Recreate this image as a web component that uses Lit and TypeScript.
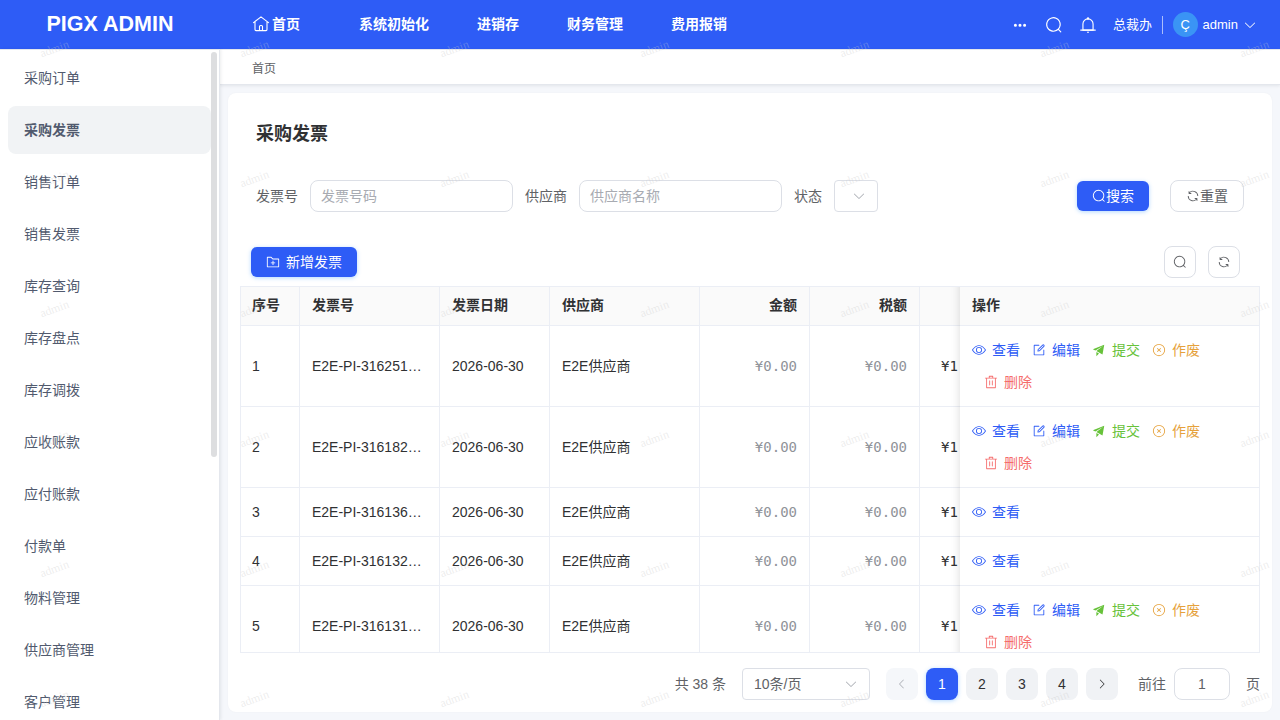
import { LitElement, html, css, svg } from "lit";
import { customElement } from "lit/decorators.js";

const ICONS: Record<string, string[]> = {
  search: ["m795.904 750.72 124.992 124.928a32 32 0 0 1-45.248 45.248L750.656 795.904a416 416 0 1 1 45.248-45.248zM480 832a352 352 0 1 0 0-704 352 352 0 0 0 0 704"],
  refresh: ["M771.776 794.88A384 384 0 0 1 128 512h64a320 320 0 0 0 555.712 216.448H654.72a32 32 0 1 1 0-64h149.056a32 32 0 0 1 32 32v148.928a32 32 0 1 1-64 0v-50.56zM276.288 295.616h92.992a32 32 0 0 1 0 64H220.16a32 32 0 0 1-32-32V178.56a32 32 0 0 1 64 0v50.56A384 384 0 0 1 896.128 512h-64a320 320 0 0 0-555.776-216.384z"],
  down: ["M831.872 340.864 512 652.672 192.128 340.864a30.592 30.592 0 0 0-42.752 0 29.12 29.12 0 0 0 0 41.6L489.664 714.24a32 32 0 0 0 44.672 0l340.288-331.712a29.12 29.12 0 0 0 0-41.728 30.592 30.592 0 0 0-42.752 0z"],
  left: ["M609.408 149.376 277.76 489.6a32 32 0 0 0 0 44.672l331.648 340.352a29.12 29.12 0 0 0 41.728 0 30.592 30.592 0 0 0 0-42.752L339.264 511.936l311.872-319.872a30.592 30.592 0 0 0 0-42.688 29.12 29.12 0 0 0-41.728 0z"],
  right: ["M340.864 149.312a30.592 30.592 0 0 0 0 42.752L652.736 512 340.864 831.872a30.592 30.592 0 0 0 0 42.752 29.12 29.12 0 0 0 41.728 0L714.24 534.336a32 32 0 0 0 0-44.672L382.592 149.376a29.12 29.12 0 0 0-41.728 0z"],
  view: ["M512 160c320 0 512 352 512 352S832 864 512 864 0 512 0 512s192-352 512-352m0 64c-225.28 0-384.128 208.064-436.8 288 52.608 79.872 211.456 288 436.8 288 225.28 0 384.128-208.064 436.8-288-52.608-79.872-211.456-288-436.8-288m0 64a224 224 0 1 1 0 448 224 224 0 0 1 0-448m0 64a160.192 160.192 0 0 0-160 160c0 88.192 71.744 160 160 160s160-71.808 160-160-71.744-160-160-160"],
  edit: ["M832 512a32 32 0 1 1 64 0v352a32 32 0 0 1-32 32H160a32 32 0 0 1-32-32V160a32 32 0 0 1 32-32h352a32 32 0 0 1 0 64H192v640h640z", "m469.952 554.24 52.8-7.552L847.104 222.4a32 32 0 1 0-45.248-45.248L477.44 501.44l-7.552 52.8zm422.4-422.4a96 96 0 0 1 0 135.808l-331.84 331.84a32 32 0 0 1-18.112 9.088L436.8 623.68a32 32 0 0 1-36.224-36.224l15.104-105.6a32 32 0 0 1 9.024-18.112l331.904-331.84a96 96 0 0 1 135.744 0z"],
  send: ["m64 448 832-320-128 704-446.08-243.328L832 192 242.816 545.472zm256 512V657.024L512 768z"],
  close: ["m466.752 512-90.496-90.496a32 32 0 0 1 45.248-45.248L512 466.752l90.496-90.496a32 32 0 0 1 45.248 45.248L557.248 512l90.496 90.496a32 32 0 1 1-45.248 45.248L512 557.248l-90.496 90.496a32 32 0 0 1-45.248-45.248z", "M512 896a384 384 0 1 0 0-768 384 384 0 0 0 0 768m0 64a448 448 0 1 1 0-896 448 448 0 0 1 0 896"],
  del: ["M160 256H96a32 32 0 0 1 0-64h256V95.936a32 32 0 0 1 32-32h256a32 32 0 0 1 32 32V192h256a32 32 0 1 1 0 64h-64v672a32 32 0 0 1-32 32H192a32 32 0 0 1-32-32zm448-64v-64H416v64zM224 896h576V256H224zm192-128a32 32 0 0 1-32-32V416a32 32 0 0 1 64 0v320a32 32 0 0 1-32 32m192 0a32 32 0 0 1-32-32V416a32 32 0 0 1 64 0v320a32 32 0 0 1-32 32"],
  folder: ["M128 192v640h768V320H485.76L357.504 192zm-32-64h287.872l128.384 128H928a32 32 0 0 1 32 32v576a32 32 0 0 1-32 32H96a32 32 0 0 1-32-32V160a32 32 0 0 1 32-32m384 416V416h64v128h128v64H544v128h-64V608H352v-64z"],
  bell: ["M512 64a64 64 0 0 1 64 64v64H448v-64a64 64 0 0 1 64-64", "M256 768h512V448a256 256 0 1 0-512 0zm256-640a320 320 0 0 1 320 320v384H192V448a320 320 0 0 1 320-320", "M96 768h832q32 0 32 32t-32 32H96q-32 0-32-32t32-32m352 128h128a64 64 0 0 1-128 0"],
  more: ["M176 416a112 112 0 1 0 0 224 112 112 0 0 0 0-224m336 0a112 112 0 1 0 0 224 112 112 0 0 0 0-224m336 0a112 112 0 1 0 0 224 112 112 0 0 0 0-224"],
};

const icon = (name: string, cls = "i14") => html`<svg class=${cls} viewBox="0 0 1024 1024" fill="currentColor">${ICONS[name].map((d) => svg`<path d=${d}></path>`)}</svg>`;

const homeIcon = html`<svg class="i18" viewBox="0 0 18 18" fill="none" stroke="currentColor" stroke-width="1.1" stroke-linejoin="round" stroke-linecap="round"><path d="M1.5 7.6 9 1.9l7.5 5.7M3 7v7.6q0 1 1 1h10q1 0 1-1V7M7.5 15.3v-3.8q0-1 1-1h1q1 0 1 1v3.8"></path></svg>`;

const MENU = ["采购订单", "采购发票", "销售订单", "销售发票", "库存查询", "库存盘点", "库存调拨", "应收账款", "应付账款", "付款单", "物料管理", "供应商管理", "客户管理"];
const ROWS = [
  { no: "E2E-PI-316251…", full: true },
  { no: "E2E-PI-316182…", full: true },
  { no: "E2E-PI-316136…", full: false },
  { no: "E2E-PI-316132…", full: false },
  { no: "E2E-PI-316131…", full: true },
];

@customElement("app-root")
export class AppRoot extends LitElement {
  static styles = css`
    * { box-sizing: border-box; }
    :host {
      display: grid; grid-template: 49px 671px / 220px 1060px; position: relative;
      width: 1280px; height: 720px; overflow: hidden; background: #f5f7fb;
      font: 14px/22px "Liberation Sans", "Noto Sans CJK SC", sans-serif; color: #606266;
    }
    svg { display: block; flex: none; }
    .i14 { width: 14px; height: 14px; }
    .i12 { width: 12px; height: 12px; }
    .i18 { width: 18px; height: 18px; }
    header { grid-column: 1 / 3; display: flex; align-items: center; background: #2e5cf6; color: #fff; height: 49px; }
    .logo { width: 220px; text-align: center; font-size: 21.5px; font-weight: 700; line-height: 48px; height: 49px; }
    nav { display: flex; align-items: center; font-weight: 700; margin-left: 32px; flex: 1; height: 49px; padding-bottom: 1px; }
    nav span { margin-right: 48px; }
    nav .home { display: flex; align-items: center; gap: 2px; margin-right: 59px; }
    .tools { display: flex; align-items: center; font-size: 13px; padding-right: 23px; }
    .dept { margin-left: 16.5px; }
    .rule { width: 1px; height: 18px; background: #abbefb; margin: 0 10px 0 9.5px; }
    .avatar { width: 25px; height: 25px; border-radius: 50%; background: #3a94f5; text-align: center; line-height: 26px; font-size: 13px; }
    .user { margin: 0 5px 0 5px; }
    .more { margin-right: 18px; }
    .find { margin-right: 16px; }
    aside { background: #fff; border-top: 1px solid #e4e7ed; border-right: 1px solid #e4e7ed; display: flex; box-shadow: 1px 0 3px rgba(0, 21, 41, 0.08); height: 671px; overflow: hidden; z-index: 1; }
    .menu { width: 203px; margin-left: 8px; display: flex; flex-direction: column; gap: 4px; padding-top: 4px; }
    .menu div { height: 48px; flex: none; padding: 0 16px; line-height: 48px; border-radius: 8px; color: #515a6e; }
    .menu .on { background: #f1f3f5; font-weight: 700; }
    .thumb { width: 6px; height: 405px; margin-top: 2px; border-radius: 3px; background: #dddee0; }
    main { display: flex; flex-direction: column; }
    .crumb { height: 36px; background: #fff; border-top: 1px solid #e4e7ed; border-bottom: 1px solid #e4e7ed; padding: 0 32px; line-height: 38px; font-size: 12px; box-shadow: 0 1px 3px rgba(0, 21, 41, 0.08); }
    .card { margin: 8px 8px 0; height: 619px; background: #fff; border-radius: 8px; padding: 0 12px; box-shadow: 0 0 2px rgba(0, 0, 0, 0.04); display: flex; flex-direction: column; }
    h1 { margin: 27px 16px 0; font-size: 18px; line-height: 28px; font-weight: 700; color: #303133; height: 28px; }
    .form { display: flex; align-items: center; height: 32px; margin: 32px 16px 0; }
    .form label { margin-right: 12px; }
    .input { width: 203px; height: 32px; border: 1px solid #dcdfe6; border-radius: 8px; padding: 0 10px; line-height: 30px; color: #a8abb2; margin-right: 12px; }
    .select { width: 44px; height: 32px; border: 1px solid #dcdfe6; border-radius: 4px; display: flex; align-items: center; padding-left: 17px; color: #a8abb2; margin-right: auto; }
    .btn { display: flex; align-items: center; justify-content: center; border-radius: 6px; height: 30px; }
    .primary { background: #2e5cf6; color: #fff; box-shadow: 0 1px 4px rgba(64, 158, 255, 0.4); }
    .go { width: 72px; margin-right: 21px; }
    .plain { border: 1px solid #dcdfe6; border-radius: 8px; height: 32px; }
    .reset { width: 74px; }
    .bar { display: flex; align-items: center; height: 32px; margin: 34px 20px 8px 11px; gap: 12px; }
    .add { width: 106px; gap: 6px; margin-right: auto; }
    .sq { width: 32px; }
    .table { height: 367px; border: 1px solid #ebeef5; overflow: hidden; position: relative; color: #303133; }
    .row { display: grid; grid-template-columns: 59px 140px 110px 150px 110px 110px 40px 299px; height: 81px; }
    .row.short { height: 49px; }
    .row.head { height: 39px; font-weight: 700; }
    .head .cell { background: #fafafa; padding-bottom: 2px; }
    .cell { border-right: 1px solid #ebeef5; border-bottom: 1px solid #ebeef5; padding: 0 12px; display: flex; align-items: center; white-space: nowrap; overflow: hidden; }
    .cell:first-child { padding-left: 11px; }
    .num { justify-content: flex-end; }
    .mono { font-family: "DejaVu Sans Mono", monospace; color: #909399; }
    .cut { justify-content: flex-start; padding: 0 0 0 21px; color: #303133; font-family: "DejaVu Sans Mono", monospace; border-right: 0; }
    .ops { display: flex; flex-wrap: wrap; align-content: center; row-gap: 0; column-gap: 12px; line-height: 32px; border-right: 0; }
    .op { display: flex; align-items: center; gap: 6px; height: 32px; }
    .view, .edit { color: #2e5cf6; }
    .send { color: #67c23a; }
    .close { color: #e6a23c; }
    .del { color: #f56c6c; margin-left: 12px; margin-right: 150px; }
    .shade { position: absolute; top: 0; bottom: 0; left: 709px; width: 10px; box-shadow: inset -10px 0 10px -10px rgba(0, 0, 0, 0.15); }
    .pager { display: flex; align-items: center; justify-content: flex-end; height: 32px; margin-top: 15px; }
    .size { width: 128px; height: 32px; border: 1px solid #dcdfe6; border-radius: 4px; display: flex; align-items: center; justify-content: space-between; padding: 0 11px; margin: 0 16px; }
    .size svg { color: #a8abb2; }
    .pg { width: 32px; height: 32px; border-radius: 8px; background: #f0f2f5; color: #303133; display: flex; align-items: center; justify-content: center; margin-right: 8px; }
    .off { background: #f5f7fa; color: #a8abb2; }
    .cur { background: #2e5cf6; color: #fff; box-shadow: 0 1px 4px rgba(64, 158, 255, 0.4); }
    .jump { width: 56px; height: 32px; border: 1px solid #dcdfe6; border-radius: 8px; text-align: center; line-height: 30px; margin: 0 16px 0 8px; }
    .goto { margin-left: 12px; }
    .mark { position: absolute; inset: 0; width: 1280px; height: 720px; z-index: 5; pointer-events: none; }
    .mark text { font: 12px "Liberation Serif", serif; fill: rgba(200, 200, 200, 0.33); }
  `;

  private op(cls: string, label: string) {
    return html`<span class="op ${cls}">${icon(cls)}${label}</span>`;
  }

  private marks() {
    const out = [];
    for (let y = 0; y < 720; y += 130)
      for (let x = 0; x < 1280; x += 200)
        out.push(svg`<text transform="translate(${x} ${y}) rotate(-20)" x="19.5" y="68.3">admin</text>`);
    return out;
  }

  render() {
    return html`
      <header>
        <div class="logo">PIGX ADMIN</div>
        <nav><span class="home">${homeIcon}首页</span><span>系统初始化</span><span>进销存</span><span>财务管理</span><span>费用报销</span></nav>
        <div class="tools">
          ${icon("more", "i14 more")}${icon("search", "i18 find")}${icon("bell", "i18")}
          <span class="dept">总裁办</span><span class="rule"></span><span class="avatar">Ç</span><span class="user">admin</span>${icon("down")}
        </div>
      </header>
      <aside>
        <div class="menu">${MENU.map((m, i) => html`<div class=${i === 1 ? "on" : ""}>${m}</div>`)}</div>
        <div class="thumb"></div>
      </aside>
      <main>
        <div class="crumb">首页</div>
        <section class="card">
          <h1>采购发票</h1>
          <div class="form">
            <label>发票号</label><div class="input">发票号码</div>
            <label>供应商</label><div class="input">供应商名称</div>
            <label>状态</label><div class="select">${icon("down")}</div>
            <div class="btn primary go">${icon("search")}搜索</div>
            <div class="btn plain reset">${icon("refresh")}重置</div>
          </div>
          <div class="bar">
            <div class="btn primary add">${icon("folder")}新增发票</div>
            <div class="btn plain sq">${icon("search")}</div>
            <div class="btn plain sq">${icon("refresh")}</div>
          </div>
          <div class="table">
            <div class="row head">
              <div class="cell">序号</div><div class="cell">发票号</div><div class="cell">发票日期</div><div class="cell">供应商</div>
              <div class="cell num">金额</div><div class="cell num">税额</div><div class="cell cut"></div><div class="cell ops">操作</div>
            </div>
            ${ROWS.map((r, i) => html`<div class="row ${r.full ? "" : "short"}">
              <div class="cell">${i + 1}</div><div class="cell">${r.no}</div><div class="cell">2026-06-30</div><div class="cell">E2E供应商</div>
              <div class="cell num mono">¥0.00</div><div class="cell num mono">¥0.00</div><div class="cell cut">¥1</div>
              <div class="cell ops">${this.op("view", "查看")}${r.full ? [this.op("edit", "编辑"), this.op("send", "提交"), this.op("close", "作废"), this.op("del", "删除")] : ""}</div>
            </div>`)}
            <div class="shade"></div>
          </div>
          <div class="pager">
            <span>共 38 条</span>
            <div class="size">10条/页${icon("down")}</div>
            <div class="pg off">${icon("left", "i12")}</div>
            <div class="pg cur">1</div><div class="pg">2</div><div class="pg">3</div><div class="pg">4</div>
            <div class="pg">${icon("right", "i12")}</div>
            <span class="goto">前往</span><div class="jump">1</div><span>页</span>
          </div>
        </section>
      </main>
      <svg class="mark" viewBox="0 0 1280 720">${this.marks()}</svg>
    `;
  }
}
